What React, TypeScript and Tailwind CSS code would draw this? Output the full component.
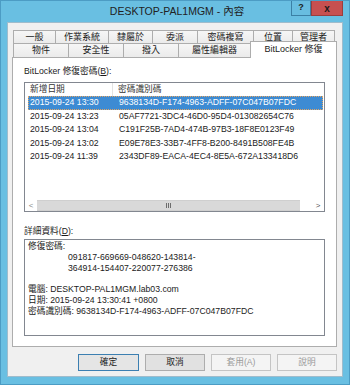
import React from "react";

const font = { fontFamily: '"Liberation Sans", "Noto Sans CJK TC", sans-serif' };

const row1: [string, number][] = [
  ["一般", 42],
  ["作業系統", 53],
  ["隸屬於", 44],
  ["委派", 45],
  ["密碼複寫", 56],
  ["位置", 39],
  ["管理者", 43],
];

const row2: [string, number][] = [
  ["物件", 55],
  ["安全性", 55],
  ["撥入", 55],
  ["屬性編輯器", 72],
];

const keys = [
  ["2015-09-24 13:30", "9638134D-F174-4963-ADFF-07C047B07FDC"],
  ["2015-09-24 13:23", "05AF7721-3DC4-46D0-95D4-013082654C76"],
  ["2015-09-24 13:04", "C191F25B-7AD4-474B-97B3-18F8E0123F49"],
  ["2015-09-24 13:02", "E09E78E3-33B7-4FF8-B200-8491B508FE4B"],
  ["2015-09-24 11:39", "2343DF89-EACA-4EC4-8E5A-672A133418D6"],
];

export default function App() {
  return (
    <div style={font} className="w-[350px] h-[385px] bg-[#69bfe2] border border-[#4c9cc4] flex flex-col text-[#1b1b1b] overflow-hidden">
      {/* title bar */}
      <div className="relative h-[21px] shrink-0 flex items-center justify-center">
        <span className="text-[10.5px] text-[#222] pl-[4px]">DESKTOP-PAL1MGM - 內容</span>
        <div className="absolute right-[6px] -top-px flex h-[16px]">
          <div className="w-[20px] h-full border border-[#3b80a5] bg-[#68bde0] flex items-center justify-center text-[9px] font-bold">?</div>
          <div className="w-[32px] h-full border border-[#9b3d3d] bg-[#c75050] flex items-center justify-center text-[10px] font-bold">x</div>
        </div>
      </div>

      {/* body */}
      <div className="mx-[6px] h-[355px] shrink-0 bg-[#f0f0f0] border border-[#9fbccc] flex flex-col">
        {/* tabs */}
        <div className="ml-[5px] mt-[7px] flex h-[13px] shrink-0">
          {row1.map(([t, w], i) => (
            <div
              key={t}
              style={{ width: w }}
              className={`h-full border-t border-l border-[#adadad] bg-gradient-to-b from-[#f6f6f6] to-[#ebebeb] flex items-center justify-center text-[9px] leading-none whitespace-nowrap ${i === row1.length - 1 ? "border-r" : ""}`}
            >
              {t}
            </div>
          ))}
        </div>
        <div className="ml-[5px] flex items-end h-[14px] shrink-0">
          {row2.map(([t, w]) => (
            <div
              key={t}
              style={{ width: w }}
              className="h-full border-t border-l border-[#adadad] bg-gradient-to-b from-[#f6f6f6] to-[#ebebeb] flex items-center justify-center text-[9px] leading-none whitespace-nowrap"
            >
              {t}
            </div>
          ))}
          <div className="relative z-10 w-[87px] h-[17px] -mb-px border-t border-l border-r border-[#adadad] bg-white flex items-center justify-center text-[9px] leading-none pb-[2px] whitespace-nowrap">
            BitLocker 修復
          </div>
        </div>

        {/* panel */}
        <div className="ml-[4px] mr-[5px] h-[290px] shrink-0 bg-white border border-[#adadad] px-[11px] pt-[8px] flex flex-col">
          <div className="h-[12px] shrink-0 flex items-center text-[8.7px]">
            BitLocker 修復密碼(<span className="underline">B</span>):
          </div>
          <div className="mt-[4px] h-[130px] shrink-0 border border-[#828790] flex flex-col">
            <div className="h-[13px] shrink-0 flex items-center text-[8.7px] text-[#333]">
              <div className="w-[88px] h-full pl-[5px] flex items-center border-r border-[#e3e3e3]">新增日期</div>
              <div className="pl-[5px]">密碼識別碼</div>
            </div>
            {keys.map(([d, id], i) => (
              <div
                key={id}
                className={`ml-[3px] mr-px h-[13.5px] shrink-0 flex items-center text-[8.7px] ${i === 0 ? "bg-[#3d8bd3] text-white outline-1 outline-dotted outline-[#e2a565] -outline-offset-1" : ""}`}
              >
                <div className="w-[89px] pl-[2px]">{d}</div>
                <div className="pl-[2px]">{id}</div>
              </div>
            ))}
            <div className="mt-auto h-[11px] shrink-0 flex">
              <div className="w-[12px] h-[11px] flex items-center justify-center bg-white">
                <span className="text-[8px] leading-none text-[#888]">&lt;</span>
              </div>
              <div className="w-[263px] h-[11px] bg-[#d9d9d9] border-y border-[#cfcfcf] flex items-center justify-center gap-[1px]">
                <div className="w-px h-[5px] bg-[#6d6d6d]" />
                <div className="w-px h-[5px] bg-[#6d6d6d]" />
                <div className="w-px h-[5px] bg-[#6d6d6d]" />
              </div>
              <div className="w-[12px] h-[11px] bg-white" />
              <div className="flex-1 h-[11px] flex items-center justify-center bg-white">
                <span className="text-[8px] leading-none text-[#555]">&gt;</span>
              </div>
            </div>
          </div>

          <div className="mt-[14px] h-[12px] shrink-0 flex items-center text-[8.7px]">
            詳細資料(<span className="underline">D</span>):
          </div>
          <div className="mt-px h-[97px] shrink-0 border border-[#828790] pl-[3px] pt-[1px] text-[8.7px] leading-[10.8px]">
            <div>修復密碼:</div>
            <div className="pl-[40px]">091817-669669-048620-143814-</div>
            <div className="pl-[40px]">364914-154407-220077-276386</div>
            <div>&nbsp;</div>
            <div>電腦: DESKTOP-PAL1MGM.lab03.com</div>
            <div>日期: 2015-09-24 13:30:41 +0800</div>
            <div>密碼識別碼: 9638134D-F174-4963-ADFF-07C047B07FDC</div>
          </div>
        </div>

        {/* buttons */}
        <div className="mt-[7px] mr-[5px] flex justify-end gap-[6px] text-[8.7px]">
          <button className="w-[61px] h-[17px] border border-[#3c7fb1] bg-[#e5e5e5] flex items-center justify-center">確定</button>
          <button className="w-[60px] h-[17px] border border-[#adadad] bg-[#e1e1e1] flex items-center justify-center">取消</button>
          <button className="w-[60px] h-[17px] border border-[#c4c4c4] bg-[#f4f4f4] text-[#9a9a9a] flex items-center justify-center">套用(A)</button>
          <button className="w-[60px] h-[17px] border border-[#c4c4c4] bg-[#f4f4f4] text-[#9a9a9a] flex items-center justify-center">說明</button>
        </div>
      </div>
    </div>
  );
}
